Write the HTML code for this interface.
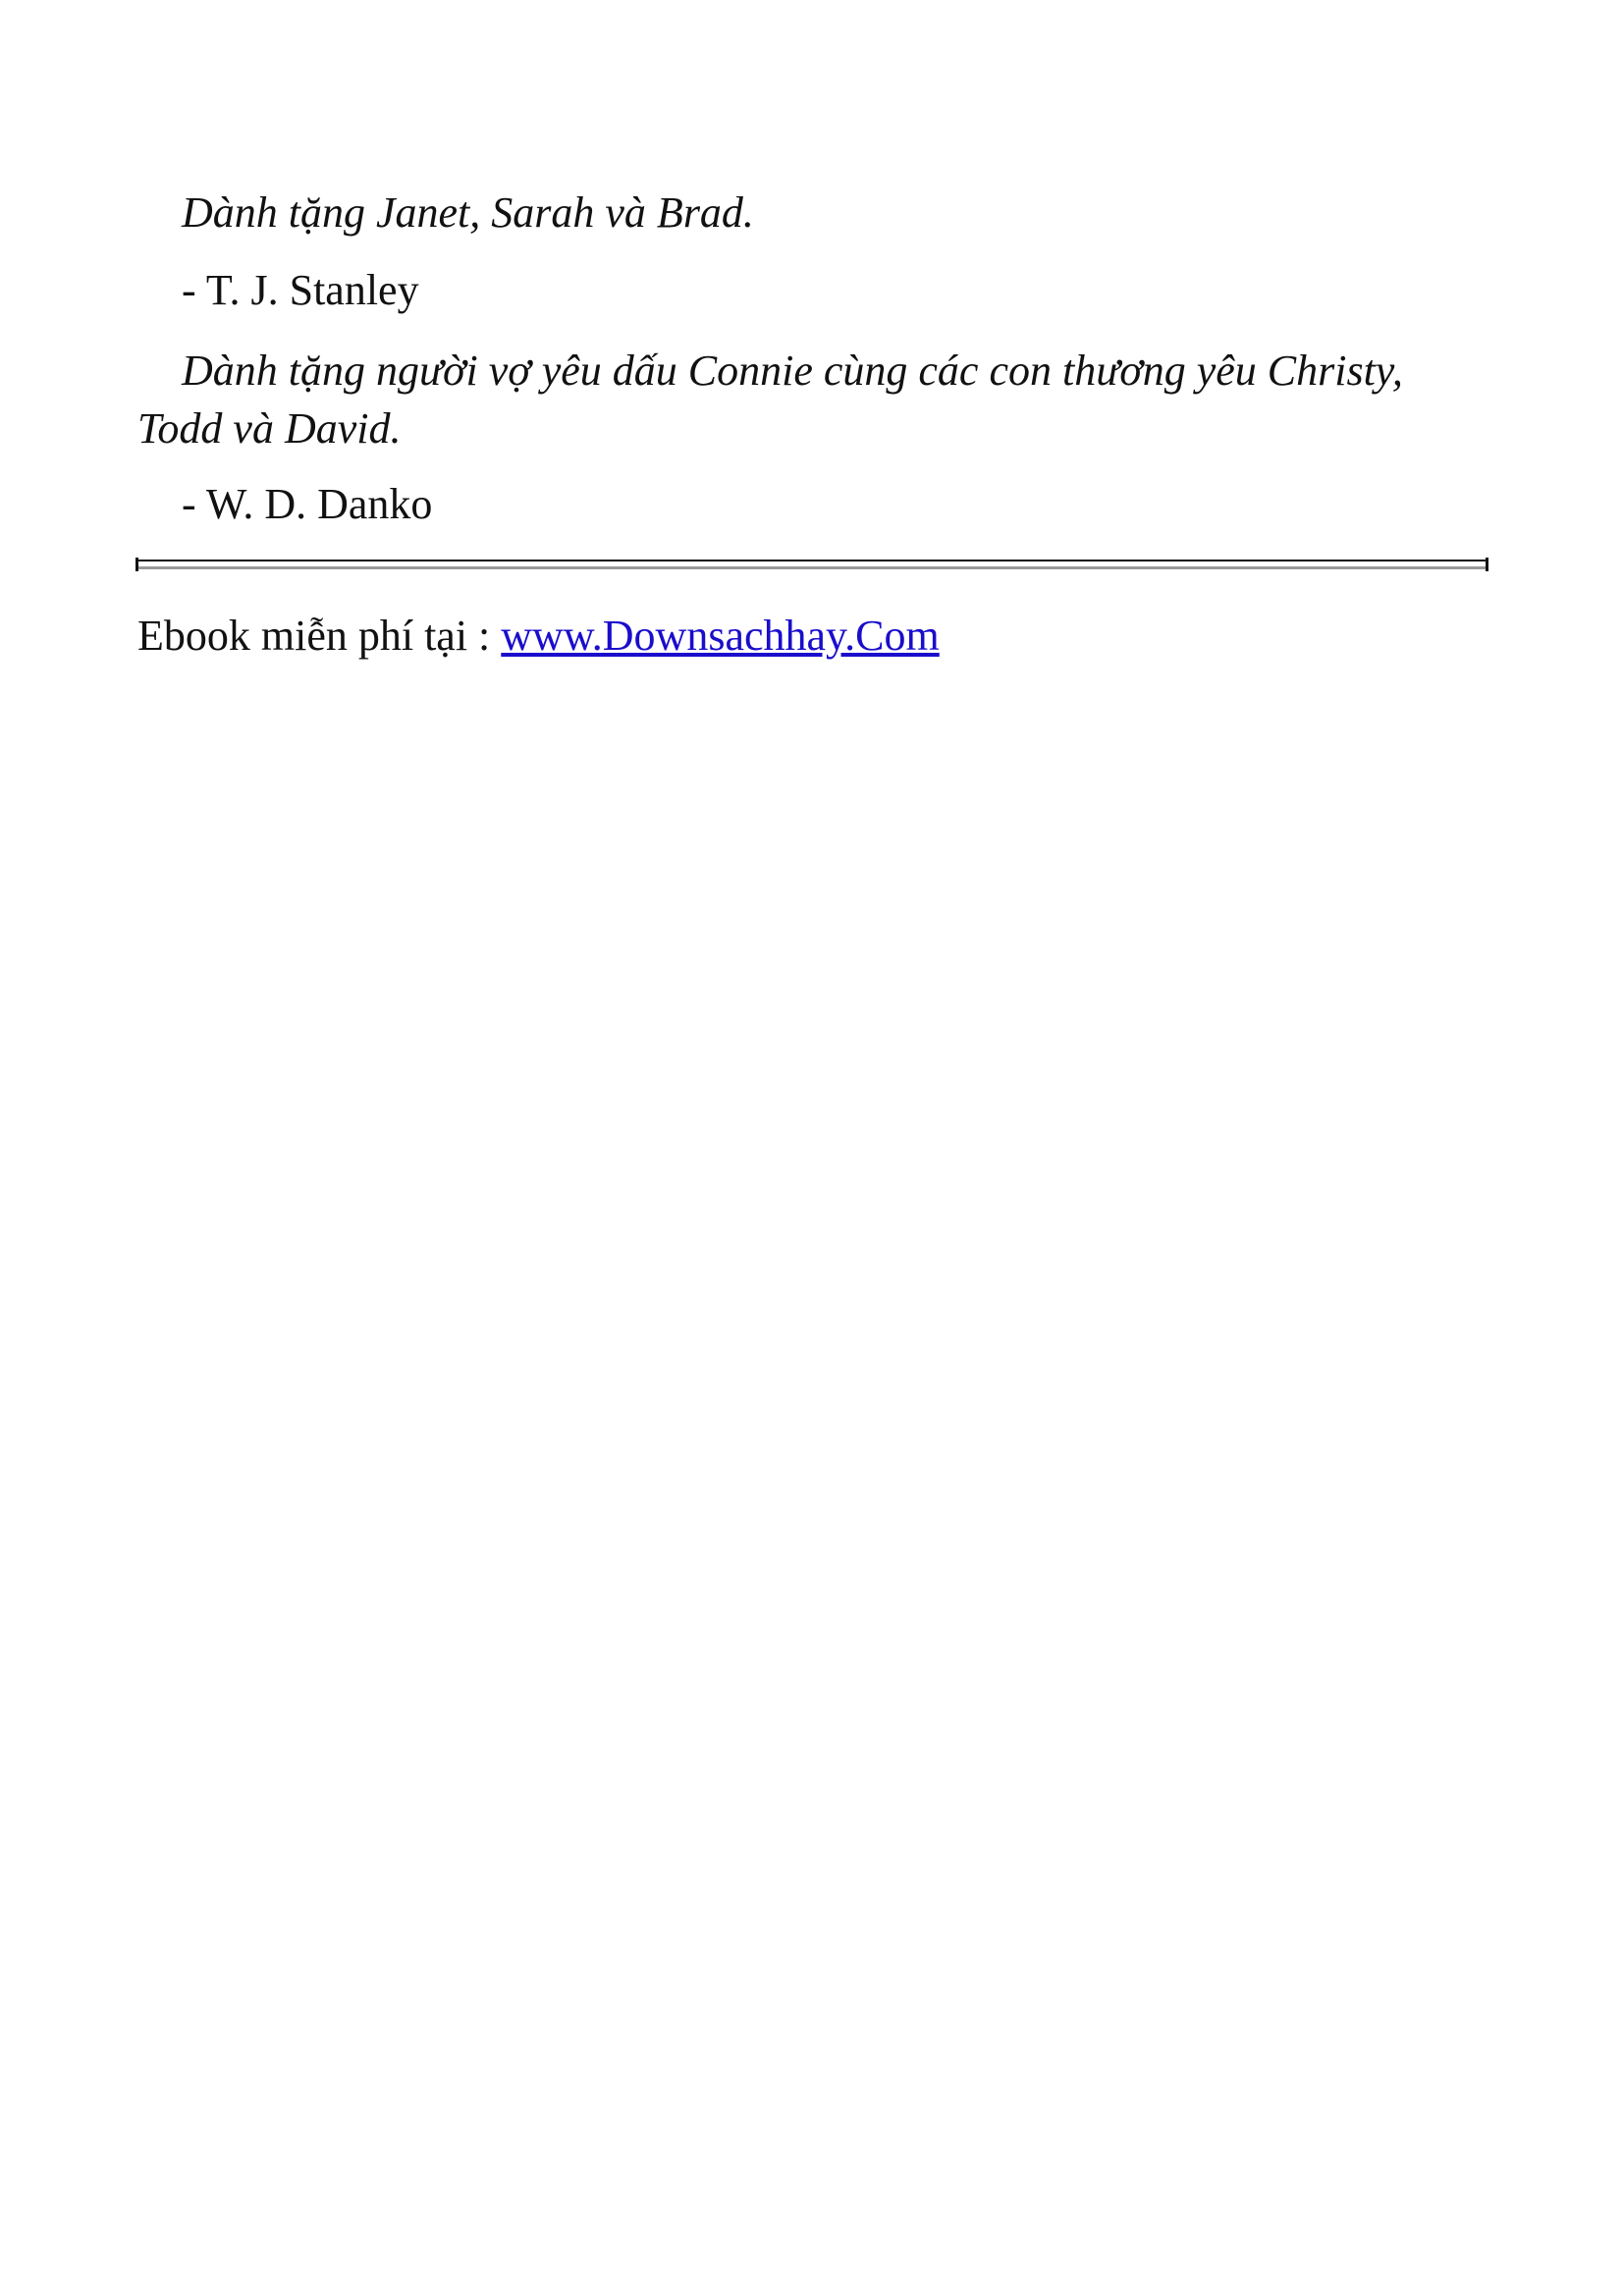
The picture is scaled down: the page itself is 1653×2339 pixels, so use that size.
<!DOCTYPE html>
<html><head><meta charset="utf-8"><style>
body{margin:0;background:#fff;width:1653px;height:2339px;position:relative;font-family:"Liberation Serif",serif;color:#111;font-size:44px}
.t{position:absolute;white-space:nowrap;line-height:1}
i{font-style:italic}
a{color:#1a0dcc;text-decoration:underline}
</style></head><body>
<div class="t" style="left:185px;top:195px"><i>Dành tặng Janet, Sarah và Brad.</i></div>
<div class="t" style="left:185px;top:274px">- T. J. Stanley</div>
<div class="t" style="left:185px;top:356px"><i>Dành tặng người vợ yêu dấu Connie cùng các con thương yêu Christy,</i></div>
<div class="t" style="left:140px;top:415px"><i>Todd và David.</i></div>
<div class="t" style="left:185px;top:492px">- W. D. Danko</div>
<div style="position:absolute;left:139px;top:570px;width:1377px;height:2px;background:#111"></div>
<div style="position:absolute;left:139px;top:577px;width:1377px;height:3px;background:#999"></div>
<div style="position:absolute;left:138px;top:568px;width:3px;height:14px;background:#111"></div>
<div style="position:absolute;left:1513px;top:568px;width:3px;height:14px;background:#111"></div>
<div class="t" style="left:140px;top:626px">Ebook miễn phí tại : <a>www.Downsachhay.Com</a></div>
</body></html>
